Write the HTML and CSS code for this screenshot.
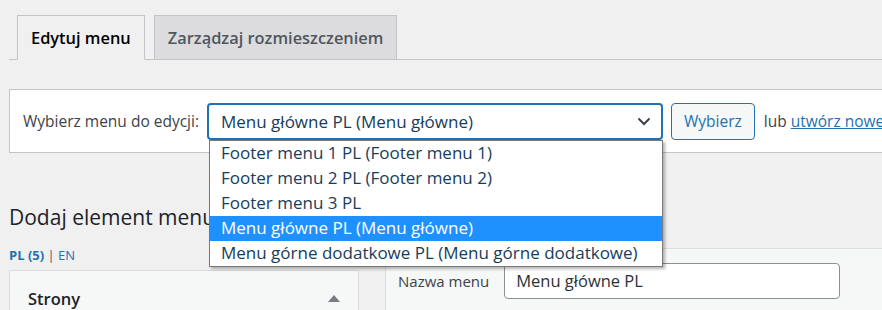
FILE: index.html
```html
<!DOCTYPE html>
<html lang="pl">
<head>
    <meta charset="UTF-8">
    <meta name="viewport" content="width=device-width, initial-scale=1.0">
    <title>Menu</title>
    <link rel="stylesheet" href="styles.css">
</head>
<body>
<div class="wrap">

    <!-- Tabs -->
    <nav class="nav-tabs">
        <a class="nav-tab active">Edytuj menu</a>
        <a class="nav-tab">Zarządzaj rozmieszczeniem</a>
    </nav>

    <!-- Menu picker -->
    <div class="manage-menus">
        <label class="picker-label">Wybierz menu do edycji:</label>
        <div class="select-box">
            <span>Menu główne PL (Menu główne)</span>
            <svg class="chevron" width="14" height="9" viewBox="0 0 14 9"><path d="M1.5 1.5 L7 7 L12.5 1.5" fill="none" stroke="#3c434a" stroke-width="2"/></svg>
            <ul class="select-list">
                <li>Footer menu 1 PL (Footer menu 1)</li>
                <li>Footer menu 2 PL (Footer menu 2)</li>
                <li>Footer menu 3 PL</li>
                <li class="selected">Menu główne PL (Menu główne)</li>
                <li>Menu górne dodatkowe PL (Menu górne dodatkowe)</li>
            </ul>
        </div>
        <button class="btn">Wybierz</button>
        <span class="or-text">lub <a class="link">utwórz nowe menu</a>.</span>
    </div>

    <div class="columns">
        <div class="left-col">
            <h2 class="section-title">Dodaj element menu</h2>
            <div class="lang-links"><b>PL (5)</b> <span class="sep">|</span> <span>EN</span></div>
            <div class="panel">
                <div class="panel-head">
                    <span>Strony</span>
                    <span class="arrow-up"></span>
                </div>
            </div>
        </div>
        <div class="right-col">
            <div class="menu-name-row">
                <label class="name-label">Nazwa menu</label>
                <div class="text-input">Menu główne PL</div>
            </div>
        </div>
    </div>

</div>
</body>
</html>
```

FILE: styles.css
```css
body { margin: 0; background: #f0f0f1; font-family: "Open Sans", sans-serif; color: #3c434a; overflow: hidden; }
.wrap { padding-left: 9px; width: 1100px; }

/* Tabs */
.nav-tabs { display: flex; padding: 15px 0 0 8px; border-bottom: 1px solid #c3c4c7; }
.nav-tab {
    height: 43px;
    line-height: 43px;
    padding: 0 13px;
    margin-right: 9px;
    margin-bottom: -1px;
    border: 1px solid #c3c4c7;
    background: #dcdcde;
    color: #50575e;
    font-size: 16.4px;
    font-weight: 600;
}
.nav-tab.active { background: #f0f0f1; color: #000; border-bottom-color: #f0f0f1; }

/* Menu picker box */
.manage-menus {
    margin-top: 29px;
    height: 62px;
    border: 1px solid #c3c4c7;
    background: #fff;
    display: flex;
    align-items: center;
    padding: 0 13px;
    font-size: 15.5px;
}
.picker-label { margin-right: 8px; }
.select-box {
    position: relative;
    box-sizing: border-box;
    width: 456px;
    height: 37px;
    border: 2px solid #2271b1;
    border-radius: 4px;
    display: flex;
    align-items: center;
    justify-content: space-between;
    padding: 0 10px 0 12px;
    font-size: 17px;
    color: #163d5c;
}
.chevron { display: block; }
.select-list {
    position: absolute;
    top: 35px;
    left: 0;
    width: 454px;
    margin: 0;
    padding: 0;
    list-style: none;
    background: #fff;
    border: 1px solid #7a7a7a;
    box-shadow: 2px 2px 3px rgba(0, 0, 0, 0.3);
    box-sizing: border-box;
    z-index: 5;
}
.select-list li { height: 25px; line-height: 24px; padding-left: 11px; white-space: nowrap; }
.select-list li.selected { background: #1e90ff; color: #fff; }
.btn {
    margin-left: 8px;
    height: 37px;
    padding: 0 12px;
    border: 1px solid #2271b1;
    border-radius: 4px;
    background: #f6f7f7;
    color: #2271b1;
    font-family: inherit;
    font-size: 15.5px;
}
.or-text { margin-left: 9px; white-space: nowrap; color: #3c434a; }
.link { color: #2271b1; text-decoration: underline; }

/* Lower columns */
.columns { display: flex; align-items: flex-start; }
.left-col { width: 350px; }
.section-title { margin: 47px 0 0; font-size: 21px; font-weight: 400; line-height: 34px; color: #1d2327; }
.lang-links { margin-top: 11px; font-size: 13px; line-height: 20px; color: #2271b1; }
.lang-links .sep { color: #50575e; }
.panel { margin-top: 5px; height: 60px; border: 1px solid #dcdcde; background: #f6f7f7; }
.panel-head { display: flex; justify-content: space-between; align-items: center; height: 55px; padding: 0 18px; font-size: 16.5px; font-weight: 600; color: #1d2327; }
.arrow-up { width: 0; height: 0; border-left: 6px solid transparent; border-right: 6px solid transparent; border-bottom: 7px solid #787c82; }

.right-col { margin: 95px 0 0 26px; flex: 1; height: 80px; border: 1px solid #dcdcde; background: #f6f7f7; padding: 14px 12px 0; }
.menu-name-row { display: flex; align-items: center; }
.name-label { font-size: 15px; margin-right: 15px; }
.text-input { box-sizing: border-box; width: 336px; height: 36px; line-height: 34px; border: 1px solid #8c8f94; border-radius: 4px; background: #fff; padding: 0 11px; font-size: 16.5px; color: #2c3338; }
```
